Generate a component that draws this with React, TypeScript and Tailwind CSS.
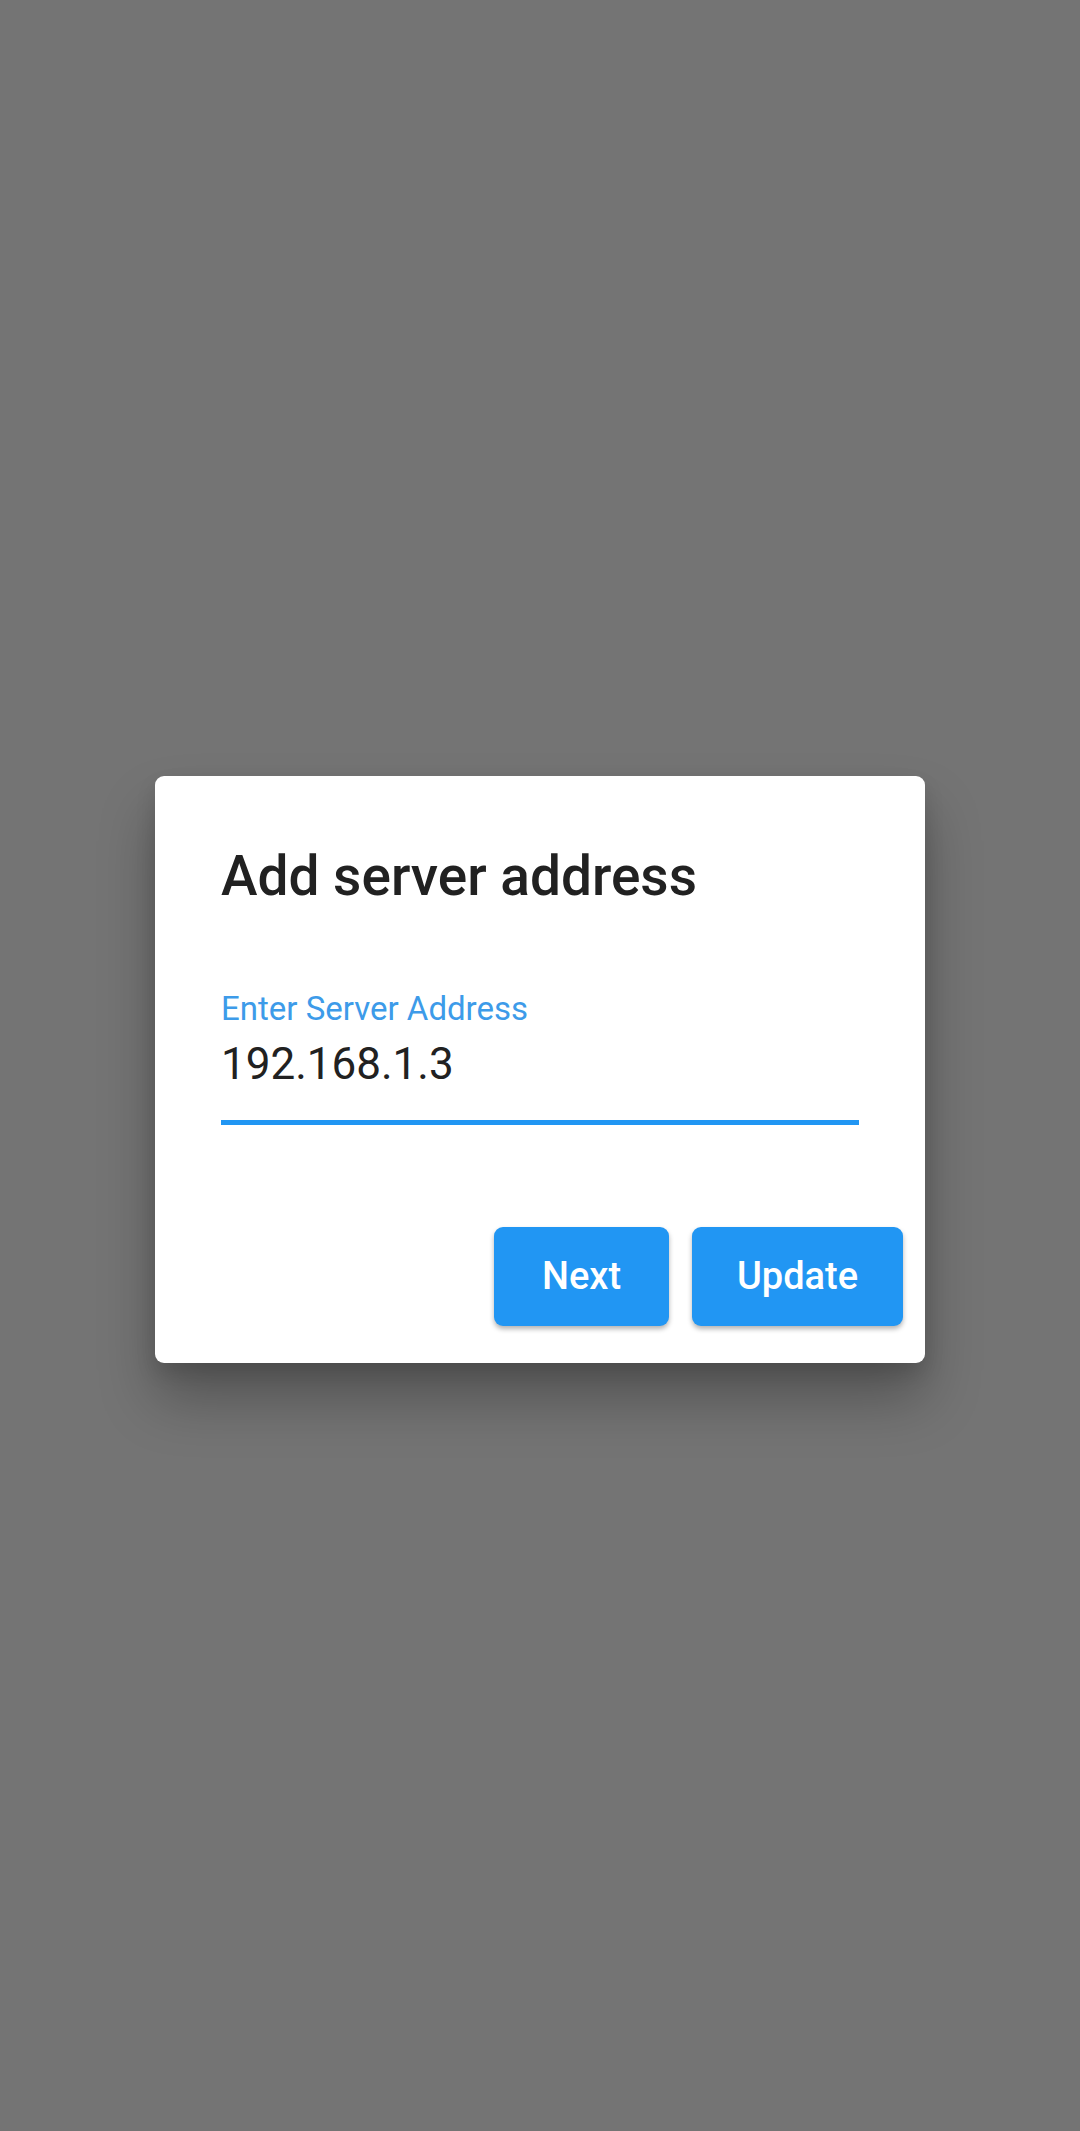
export default function App() {
  return (
    <div
      className="flex h-[2131px] w-full items-center justify-center bg-[#747474] pt-[7px]"
      style={{ fontFamily: "Roboto, 'Noto Sans', sans-serif" }}
    >
      <div className="w-[770px] rounded-[9px] bg-white pt-[68px] pb-[37px] shadow-[0_36px_56px_rgba(0,0,0,0.28),0_10px_20px_rgba(0,0,0,0.12)]">
        <h1 className="px-[66px] text-[55px] font-medium leading-[64px] text-[#212121]">
          Add server address
        </h1>

        <div className="mt-[81px] px-[66px]">
          <label className="block text-[33px] leading-[39px] text-[#3d9be9]">
            Enter Server Address
          </label>
          <div className="mt-[10px] text-[44px] leading-[52px] text-[#212121]">
            192.168.1.3
          </div>
          <div className="mt-[30px] h-[5px] bg-[#2196f3]" />
        </div>

        <div className="mt-[102px] flex justify-end gap-[23px] pr-[22px]">
          <button className="h-[99px] w-[175px] rounded-[9px] bg-[#2196f3] text-[38px] font-medium text-white shadow-[0_3px_5px_rgba(0,0,0,0.3)]">
            Next
          </button>
          <button className="h-[99px] w-[211px] rounded-[9px] bg-[#2196f3] text-[38px] font-medium text-white shadow-[0_3px_5px_rgba(0,0,0,0.3)]">
            Update
          </button>
        </div>
      </div>
    </div>
  );
}
